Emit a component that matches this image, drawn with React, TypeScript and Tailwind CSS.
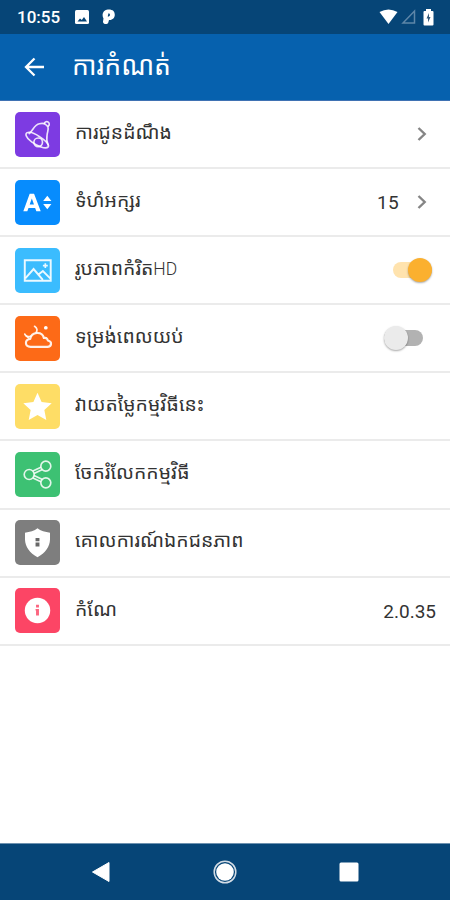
import type { ReactNode } from "react";

interface SettingRow {
	id: string;
	label: ReactNode;
	color: string;
	icon: ReactNode;
	right?: ReactNode;
}

const BellIcon = () => (
	<svg viewBox="0 0 46 46" className="size-full" fill="none" stroke="white" strokeOpacity="0.85" strokeWidth="1.700" strokeLinejoin="round" strokeLinecap="round">
		<path d="M14.500 22C18.500 19 19.500 13 25 12C27.500 11.500 29.500 11.600 31 12.500L33.600 15C34.500 17.500 33.500 19.500 33 22C32.500 26 31.500 29 33.800 33.500" />
		<path d="M30 11.500A2.600 2.600 0 1 1 34 14.500" />
		<path d="M13 21C10 21.500 10.500 26 17 30.500C23 35 31 38 33.600 36C36 33.500 31 29 25.500 25.500C20.500 22 15.500 20 13 21Z" />
		<circle cx="23.700" cy="31" r="4.400" />
	</svg>
);

const FontSizeIcon = () => (
	<svg viewBox="0 0 46 46" className="size-full" fill="white">
		<path fillRule="evenodd" d="M15 14H19.500L26.300 32H21.800L20.600 28.500H13.800L12.600 32H8.500ZM17.200 18.800L15 25H19.400Z" />
		<path d="M33 16L37.200 21.500H28.800ZM28.800 24.500H37.200L33 30Z" />
	</svg>
);

const PictureIcon = () => (
	<svg viewBox="0 0 46 46" className="size-full" fill="none" stroke="white" strokeOpacity="0.9" strokeWidth="2">
		<path d="M10 12.500H36.500V33.500H10Z" />
		<path d="M10.500 31L19 21.500L28.500 32.500M24 27L28.500 23.500L36 31" />
		<path d="M31 15.500V20.500M28.500 18H33.500" strokeWidth="1.700" />
	</svg>
);

const WeatherIcon = () => (
	<svg viewBox="0 0 46 46" className="size-full" fill="none" stroke="white" strokeOpacity="0.9" strokeWidth="2.200" strokeLinecap="round" strokeLinejoin="round">
		<path d="M16 31.500C9.500 31.500 9.800 24 15.500 23.500C17 15.500 28 15.500 29.500 22.500C33 21.500 33.500 25 33.500 25C38.500 26 37.500 31.500 33 31.500Z" />
		<path strokeWidth="1.700" d="M10 18.500C11 21 14 21.500 16.500 20.500M20 10.500C23 12.500 23 15 21.500 17" />
		<path strokeWidth="1.500" d="M11.500 20.500L14 22.500" />
		<circle cx="31.500" cy="12" r="1.900" fill="white" stroke="none" />
	</svg>
);

const StarIcon = () => (
	<svg viewBox="0 0 46 46" className="size-full" fill="white">
		<path d="M23 9L27.200 18.500L37.500 19.700L30 26.500L32 36.700L23 31.600L14 36.700L16 26.500L8.500 19.700L18.800 18.500Z" />
	</svg>
);

const ShareIcon = () => (
	<svg viewBox="0 0 46 46" className="size-full" fill="none" stroke="white" strokeOpacity="0.85" strokeWidth="1.700">
		<circle cx="14.500" cy="23" r="5.100" />
		<circle cx="31.500" cy="14.500" r="5.100" />
		<circle cx="31.500" cy="31.500" r="5.100" />
		<path d="M18.300 19.500L26.500 15.500M19.500 22L28 18M19.500 24L28 28M18.300 26.500L26.500 30.500" />
	</svg>
);

const ShieldIcon = () => (
	<svg viewBox="0 0 46 46" className="size-full">
		<path fill="white" d="M23 8.500C26 11 31 12.500 35.800 13V20C35.500 27.500 31 34 23 38C15 34 10.500 27.500 10.200 20V13C15 12.500 20 11 23 8.500Z" />
		<path fill="#686868" d="M21 18.500H25V21.800H21ZM21 23H25V27H21Z" />
	</svg>
);

const InfoIcon = () => (
	<svg viewBox="0 0 46 46" className="size-full">
		<circle cx="23" cy="23" r="13" fill="white" />
		<path fill="#fc6680" d="M21.500 17H24.500V20H21.500ZM21 21.500H24.500V28H21.500V23H21Z" />
	</svg>
);

const Chevron = () => (
	<svg viewBox="0 0 10 16" className="mr-[23px] h-4 w-2.5" fill="none" stroke="#858585" strokeWidth="2.400">
		<path d="M1.500 2L7.700 8L1.500 14" />
	</svg>
);

const Toggle = ({ on = false }: { on?: boolean }) =>
	on ? (
		<div className="mr-[18px] flex h-4 w-[39px] items-center justify-end rounded-full bg-[#ffe3ae]">
			<div className="size-6 shrink-0 rounded-full bg-[#fbb02f] shadow-[0_1px_2px_rgba(0,0,0,0.35)]" />
		</div>
	) : (
		<div className="mr-[27px] flex h-4 w-[39px] items-center rounded-full bg-[#b2b2b2]">
			<div className="size-6 shrink-0 rounded-full bg-[#ebebeb] shadow-[0_1px_2px_rgba(0,0,0,0.35)]" />
		</div>
	);

const rows: SettingRow[] = [
	{ id: "notice", label: "ការជូនដំណឹង", color: "bg-[#7d3be2]", icon: <BellIcon />, right: <Chevron /> },
	{
		id: "size",
		label: "ទំហំអក្សរ",
		color: "bg-[#078cfd]",
		icon: <FontSizeIcon />,
		right: (
			<>
				<span className="mr-[18px] pt-0.5 text-[19px] tracking-[0.3px]">15</span>
				<Chevron />
			</>
		),
	},
	{
		id: "hd",
		label: (
			<>
				រូបភាពកំរិត<span className="text-[17.500px] font-light">HD</span>
			</>
		),
		color: "bg-[#3bbcfe]",
		icon: <PictureIcon />,
		right: <Toggle on />,
	},
	{ id: "night", label: "ទម្រង់ពេលយប់", color: "bg-[#fd6a17]", icon: <WeatherIcon />, right: <Toggle /> },
	{ id: "rate", label: "វាយតម្លៃកម្មវិធីនេះ", color: "bg-[#fedd66]", icon: <StarIcon /> },
	{ id: "share", label: "ចែករំលែកកម្មវិធី", color: "bg-[#3dc173]", icon: <ShareIcon /> },
	{ id: "privacy", label: "គោលការណ៍ឯកជនភាព", color: "bg-[#7e7e7e]", icon: <ShieldIcon /> },
	{
		id: "version",
		label: "កំណែ",
		color: "bg-[#fc4565]",
		icon: <InfoIcon />,
		right: <span className="mr-3.5 pt-1 text-[19px]">2.0.35</span>,
	},
];

const StatusBar = () => (
	<div className="flex h-[34px] items-center bg-[#064577] pl-[17px] text-white">
		<span className="w-[58px] pt-0.5 text-[17px] font-medium">10:55</span>
		<svg viewBox="0 0 14 14" className="size-3.5">
			<rect width="14" height="14" rx="1.500" fill="white" />
			<path d="M2.500 11.500L5 8.500L6.800 10L9 7L12 11.500Z" fill="#064577" />
		</svg>
		<svg viewBox="0 0 14 16" className="ml-[13px] h-4 w-3.5">
			<path fillRule="evenodd" fill="white" d="M3 1.500C5 0 9.500 0 11.500 2C14.500 6 12 11.500 7 11L6.300 13.500C5.500 16 0.800 15.500 1 12.500L1.500 9.500C-0.200 6.500 0.500 3 3 1.500ZM6.500 4.300L5.700 7.500C8 8 9 4.500 6.500 4.300Z" />
		</svg>
		<svg viewBox="0 0 19 16" className="mr-[3px] ml-auto h-4 w-[19px]">
			<path d="M0.500 3Q9.500-2 18.500 3L9.500 15Z" fill="white" />
		</svg>
		<svg viewBox="0 0 15 16" className="mr-[7px] h-4 w-[15px]">
			<path d="M13.500 2V14H2Z" fill="none" stroke="#5e86a8" strokeWidth="1.500" />
		</svg>
		<svg viewBox="0 0 11 17" className="mr-4 h-[17px] w-[11px]">
			<path d="M3 0H8V2H9.500Q10.500 2 10.500 3V15.500Q10.500 16.500 9.500 16.500H1.500Q0.500 16.500 0.500 15.500V3Q0.500 2 1.500 2H3Z" fill="white" />
			<path d="M6 4L3.500 9.500H5V13.500L7.500 8H6Z" fill="#335878" />
		</svg>
	</div>
);

const NavigationBar = () => (
	<div className="flex h-[57px] items-center justify-between border-t border-[#6d91af] bg-[#064577] px-[91px]">
		<svg viewBox="0 0 20 22" className="h-[22px] w-5">
			<path d="M18 1.500V20.500L1.500 11Z" fill="white" stroke="white" strokeLinejoin="round" />
		</svg>
		<svg viewBox="0 0 24 24" className="size-6">
			<circle cx="12" cy="12" r="10.800" fill="none" stroke="#d3dce5" strokeWidth="1.500" />
			<circle cx="12" cy="12" r="8.800" fill="white" />
		</svg>
		<svg viewBox="0 0 20 20" className="size-5">
			<rect x="0.500" y="0.500" width="19" height="19" rx="1.500" fill="white" />
		</svg>
	</div>
);

export default function App() {
	return (
		<div className="flex h-[900px] w-[450px] flex-col overflow-hidden bg-white font-[Roboto,'Noto_Sans_Khmer','Khmer_OS',sans-serif] text-[#333]">
			<StatusBar />
			<header className="flex h-[67px] items-center border-b border-[#3f72b3] bg-[#0661ae] pl-6 text-white">
				<svg viewBox="0 0 20 20" className="size-5" fill="none" stroke="white" strokeWidth="2.300">
					<path d="M10.500 1.500L2 10L10.500 18.500M2 10H20" />
				</svg>
				<h1 className="ml-7 pb-0.5 text-[26.600px] leading-none whitespace-nowrap">ការកំណត់</h1>
			</header>

			<main className="flex-1">
				{rows.map((row) => (
					<div key={row.id} className="flex h-[68.1px] items-center border-b-2 border-[#ebebeb] pl-[15px]">
						<div className={`size-[45px] shrink-0 overflow-hidden rounded-[5px] ${row.color}`}>{row.icon}</div>
						<span className="ml-[15px] pb-[3px] text-[19.400px] leading-none whitespace-nowrap">{row.label}</span>
						<div className="ml-auto flex items-center">{row.right}</div>
					</div>
				))}
			</main>

			<NavigationBar />
		</div>
	);
}
